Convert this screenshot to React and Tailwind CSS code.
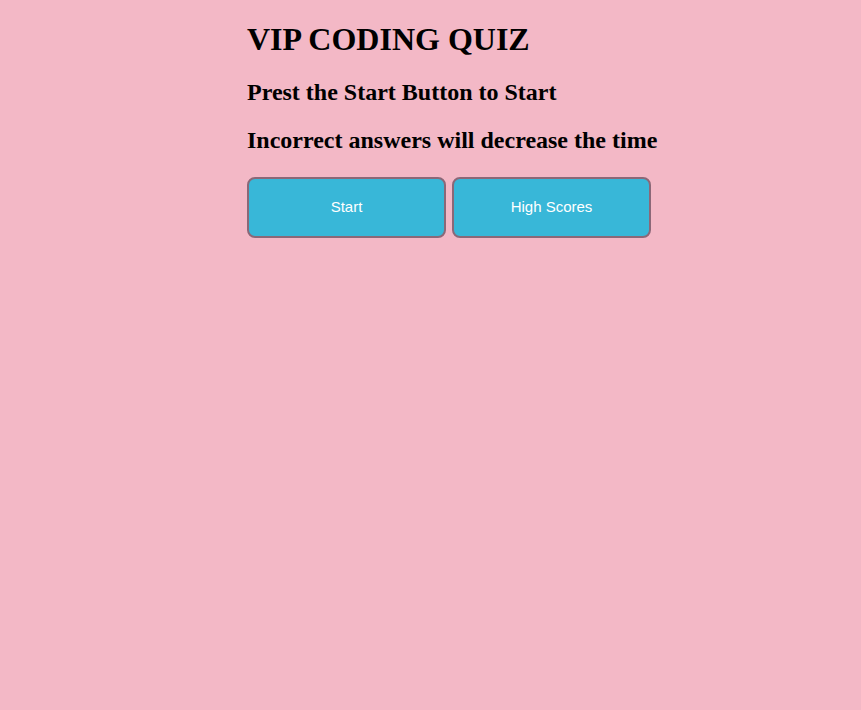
export default function App() {
  return (
    <div className="min-h-[710px] w-full bg-[#f3b8c6] font-['Liberation_Serif',serif] text-black">
      <div className="pl-[247px] pt-[21px]">
        <h1 className="text-[32px] font-bold leading-[37px]">VIP CODING QUIZ</h1>
        <h2 className="mt-[20px] text-[24px] font-bold leading-[28px]">Prest the Start Button to Start</h2>
        <h2 className="mt-[20px] text-[24px] font-bold leading-[28px]">Incorrect answers will decrease the time</h2>
        <div className="mt-[23px] flex gap-[6px]">
          <button className="h-[61px] w-[199px] rounded-[8px] border-2 border-[#8b6878] bg-[#38b7d8] font-['Liberation_Sans',sans-serif] text-[15px] text-white">
            Start
          </button>
          <button className="h-[61px] w-[199px] rounded-[8px] border-2 border-[#8b6878] bg-[#38b7d8] font-['Liberation_Sans',sans-serif] text-[15px] text-white">
            High Scores
          </button>
        </div>
      </div>
    </div>
  );
}
